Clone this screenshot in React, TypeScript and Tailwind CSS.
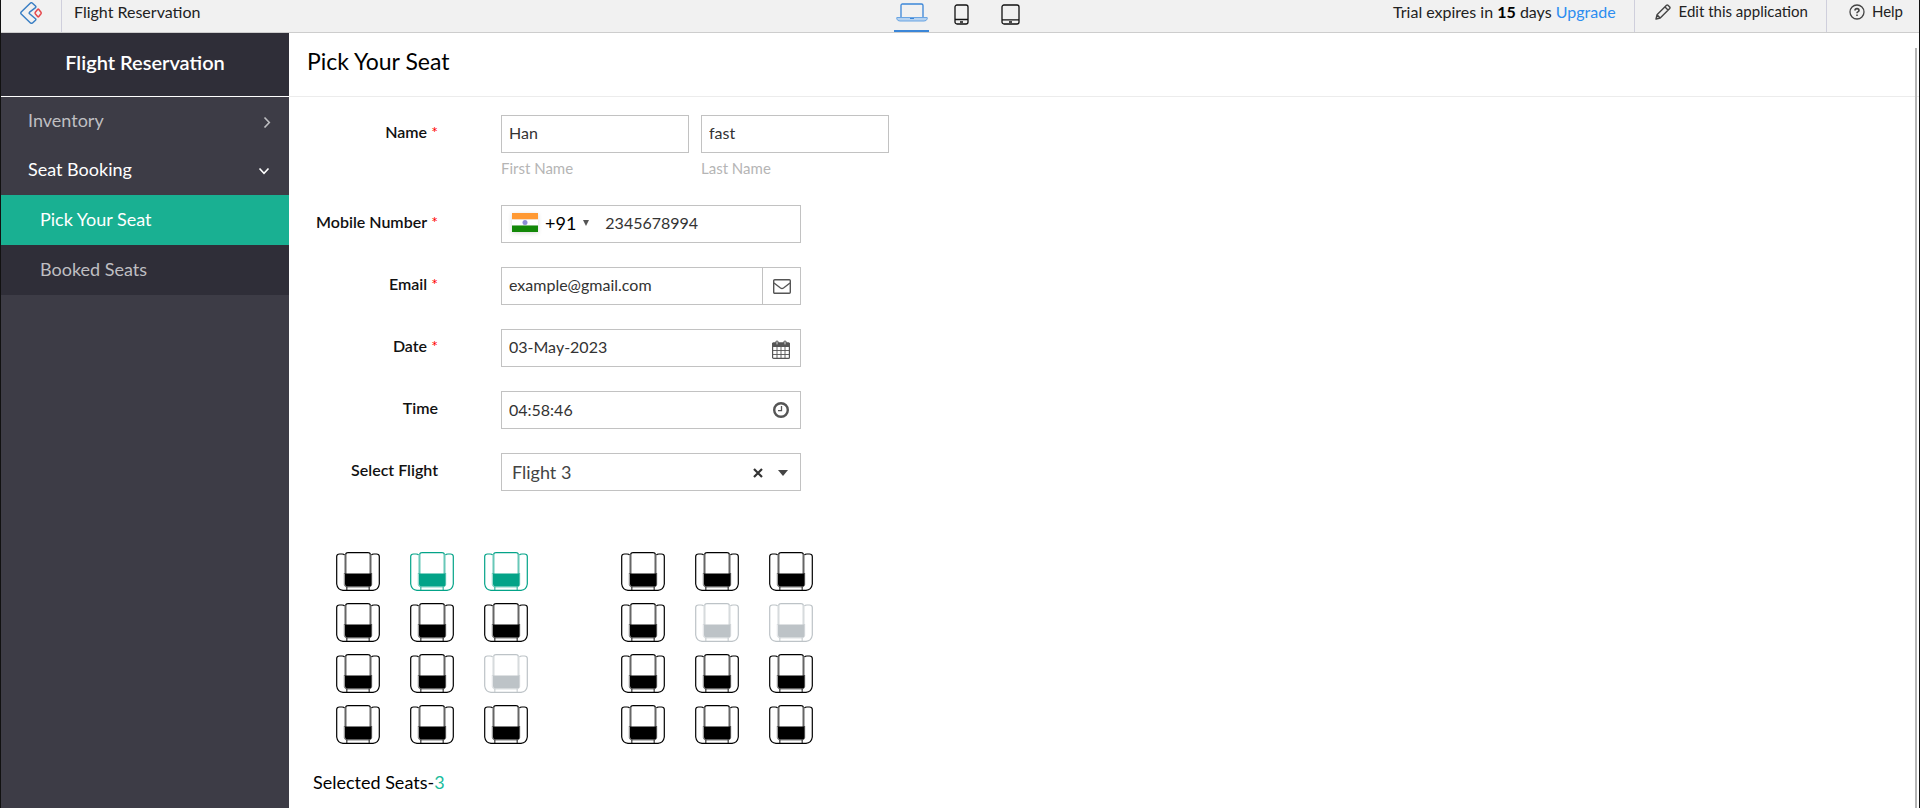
import { useState, type ReactNode } from "react";

type SeatState = "free" | "picked" | "taken";

const seatRows: SeatState[][] = [
  ["free", "picked", "picked", "free", "free", "free"],
  ["free", "free", "free", "free", "taken", "taken"],
  ["free", "free", "taken", "free", "free", "free"],
  ["free", "free", "free", "free", "free", "free"],
];

const seatColour: Record<SeatState, string> = {
  free: "text-black",
  picked: "text-[#03a388]",
  taken: "text-[#bdc3c7]",
};

function Seat({ state, label }: { state: SeatState; label: string }) {
  return (
    <button type="button" aria-label={label} disabled={state === "taken"} className={`block ${seatColour[state]}`}>
      <svg width="44" height="39" viewBox="0 0 44 39" fill="none" stroke="currentColor">
        <path strokeWidth="1.2" d="M8.500 3Q8 2 6 2H3.500Q.7 2 .7 4.500V32Q1.500 38 7 38.300H37Q42.500 38 43.300 32V4.500Q43.300 2 40.500 2H38Q36 2 35.500 3" />
        <path strokeWidth="1.3" d="M9.500 2.500Q10 .7 12 .7H32Q34 .7 34.500 2.500" />
        <path strokeWidth="2" strokeOpacity=".6" d="M9.500 2.500V22M34.500 2.500V22" />
        <path strokeWidth="1" strokeOpacity=".5" d="M8.300 21V33Q9 35 11 35H33Q35 35 35.700 33V21" />
        <path strokeWidth="1.3" strokeOpacity=".7" d="M10.800 34.500V38M33.200 34.500V38" />
        <path fill="currentColor" stroke="none" d="M9 21.500H35.500V32Q35.500 34.500 33 34.500H11.500Q9 34.500 9 32Z" />
      </svg>
    </button>
  );
}

function Field({ label, id, required, children }: { label: string; id: string; required?: boolean; children: ReactNode }) {
  return (
    <div className="flex items-start">
      <label htmlFor={id} className="w-[149px] shrink-0 pt-[5px] text-right text-base font-semibold leading-6 text-[#111]">
        {label}
        {required && <span className="font-normal text-[#f00]"> *</span>}
      </label>
      <div className="ml-[63px]">{children}</div>
    </div>
  );
}

function Chevron({ down }: { down?: boolean }) {
  return (
    <svg width="12" height="12" viewBox="0 0 12 12" fill="none" stroke="currentColor" strokeWidth="1.6">
      <path d={down ? "M1.500 3.500L6 8.300L10.500 3.500" : "M5.500 1.500L10.300 6.500L5.500 11.500"} />
    </svg>
  );
}

function TopBar() {
  return (
    <header className="flex h-[33px] shrink-0 items-stretch border-b border-[#cdcdcd] bg-[#f1f1f1] text-base leading-[23px] text-[#222]">
      <div className="flex flex-1">
        <a href="#home" aria-label="Creator" className="flex w-[61px] items-start justify-center border-r border-[#cfcfdc] pt-[2px]">
          <svg width="22" height="22" viewBox="0 0 22 22" fill="none" strokeWidth="1.500" strokeLinejoin="round">
            <path stroke="#3a7fc4" d="M10.500 1Q11.300 .4 12.200 1L15.500 4Q16.200 4.800 15.500 5.600L9.600 10.200Q8.800 11 9.600 11.800L15.500 16.800Q16.200 17.500 15.500 18.200L12.500 21Q11.500 21.700 10.500 21L1.200 12Q.4 11 1.200 10Z" />
            <path stroke="#e5484d" d="M17.800 7.200Q18.200 6.800 18.600 7.200L21 10.300Q21.400 11 21 11.700L18.600 14.800Q18.200 15.200 17.800 14.800L15.300 11.700Q14.900 11 15.300 10.300Z" />
          </svg>
        </a>
        <span className="pl-3">Flight Reservation</span>
      </div>
      <div className="flex items-stretch pr-1.5">
        <button type="button" aria-label="Desktop" className="flex w-[35px] justify-center border-b-2 border-[#3b86d8] pt-[3px]">
          <svg width="32" height="19" viewBox="0 0 32 19" fill="none" stroke="#3b86d8">
            <path strokeWidth="1.300" d="M5 14V2.500Q5 1 6.500 1H25.500Q27 1 27 2.500V14" />
            <path fill="#b5d2f0" stroke="#6aa5e3" d="M.8 14.500H31.200V16Q30.500 18 28 18H4Q1.500 18 .8 16Z" />
            <path d="M14 15.500H18" />
          </svg>
        </button>
        <button type="button" aria-label="Phone" className="ml-[25px] pb-1">
          <svg width="15" height="21" viewBox="0 0 15 21" fill="none" stroke="#111" strokeWidth="1.300">
            <rect x="1" y="1" width="13" height="19" rx="2" />
            <path d="M1 15.500H14M6 18H9" />
          </svg>
        </button>
        <button type="button" aria-label="Tablet" className="ml-8 pb-1">
          <svg width="19" height="21" viewBox="0 0 19 21" fill="none" stroke="#111" strokeWidth="1.300">
            <rect x="1" y="1" width="17" height="19" rx="2" />
            <path d="M1 15.800H18M8 18H11" />
          </svg>
        </button>
      </div>
      <div className="flex flex-1 justify-end">
        <p className="pr-[18px]">
          Trial expires in <b className="font-bold text-black">15</b> days <a href="#upgrade" className="text-[#2c8df0]">Upgrade</a>
        </p>
        <a href="#edit" className="flex gap-2 border-l border-[#cfcfdc] pl-5 pr-[18px] text-[15px]">
          <svg className="mt-1" width="16" height="16" viewBox="0 0 16 16" fill="none" stroke="#444" strokeWidth="1.400" strokeLinejoin="round">
            <path d="M1 15L2 10.800L11.500 1.300Q12.200 .7 13 1.300L14.700 3Q15.300 3.800 14.700 4.500L5.200 14Z M10 3L13 6M2 10.800L5.200 14" />
          </svg>
          Edit this application
        </a>
        <a href="#help" className="flex gap-[7px] border-l border-[#cfcfdc] pl-[22px] pr-[16px] text-[15px]">
          <svg className="mt-1" width="16" height="16" viewBox="0 0 16 16" fill="none" stroke="#444" strokeWidth="1.300">
            <circle cx="8" cy="8" r="7" />
            <path strokeWidth="1.600" d="M6 6.500Q6 4.600 8 4.600T10 6.400Q10 7.300 8.800 7.900Q8 8.300 8 9.300M8 10.500V12" />
          </svg>
          Help
        </a>
      </div>
    </header>
  );
}

function Sidebar() {
  return (
    <aside className="flex w-[288px] shrink-0 flex-col bg-[#3d3c46] text-lg leading-6 text-[#bfbfc2]">
      <h2 className="flex h-16 items-center justify-center border-b border-white bg-[#2f2e38] pb-1.5 text-xl font-semibold text-white">Flight Reservation</h2>
      <nav>
        <button type="button" className="flex h-[49px] w-full items-center justify-between pb-[3px] pl-[27px] pr-[18px]">
          Inventory <span className="pt-1"><Chevron /></span>
        </button>
        <button type="button" className="flex h-[49px] w-full items-center justify-between pb-[3px] pl-[27px] pr-[19px] text-white">
          Seat Booking <span className="pt-1"><Chevron down /></span>
        </button>
        <a href="#pick" className="flex h-[50px] items-center bg-[#19b092] pb-[3px] pl-[39px] text-white">Pick Your Seat</a>
        <a href="#booked" className="flex h-[50px] items-center bg-[#2f2e38] pb-[3px] pl-[39px]">Booked Seats</a>
      </nav>
    </aside>
  );
}

const box = "h-[38px] border border-[#c2c2c2] bg-white text-base text-[#333]";

export default function App() {
  const [name, setName] = useState({ first: "Han", last: "fast" });
  const [phone, setPhone] = useState("2345678994");
  const [email, setEmail] = useState("example@gmail.com");
  const [date, setDate] = useState("03-May-2023");
  const [time, setTime] = useState("04:58:46");
  const [flight, setFlight] = useState("Flight 3");

  return (
    <div className="flex h-screen flex-col overflow-hidden border-x border-[#111] bg-white font-['Lato',sans-serif] text-black">
      <TopBar />
      <div className="flex min-h-0 flex-1">
        <Sidebar />
        <main className="relative min-w-0 flex-1">
          <h1 className="flex h-16 items-center border-b border-[#ececec] pb-[7px] pl-[18px] text-[23px] leading-7">Pick Your Seat</h1>
          <span className="absolute right-[2px] top-[15px] bottom-0 w-[2px] bg-[#b5b5b5]" />
          <form className="flex flex-col gap-6 pt-[18px]">
            <Field label="Name" id="first" required>
              <div className="flex gap-3 text-[15px] leading-5 text-[#b5b5b5]">
                <div>
                  <input id="first" value={name.first} onChange={(e) => setName({ ...name, first: e.target.value })} className={`${box} block w-[188px] px-[7px] pb-[3px]`} />
                  <label htmlFor="first" className="block pb-[3px] pt-[5px]">First Name</label>
                </div>
                <div>
                  <input id="last" value={name.last} onChange={(e) => setName({ ...name, last: e.target.value })} className={`${box} block w-[188px] px-[7px] pb-[3px]`} />
                  <label htmlFor="last" className="block pb-[3px] pt-[5px]">Last Name</label>
                </div>
              </div>
            </Field>
            <Field label="Mobile Number" id="phone" required>
              <div className={`${box} flex w-[300px] items-center pb-[3px] pl-[10px]`}>
                <button type="button" aria-label="Country code" className="flex items-center text-lg text-black">
                  <svg width="26" height="19" viewBox="0 0 26 19" className="mr-[7px] drop-shadow-sm">
                    <path fill="#ff9933" d="M0 0H26V6.500H0Z" />
                    <path fill="#fff" d="M0 6.500H26V12.500H0Z" />
                    <path fill="#138808" d="M0 12.500H26V19H0Z" />
                    <circle cx="13" cy="9.500" r="2.500" fill="#8c8cd6" />
                  </svg>
                  +91
                  <svg width="6" height="6" viewBox="0 0 6 6" className="ml-[7px]"><path fill="#555" d="M0 0H6L3 6Z" /></svg>
                </button>
                <input id="phone" value={phone} onChange={(e) => setPhone(e.target.value)} className="ml-4 w-40" />
              </div>
            </Field>
            <Field label="Email" id="email" required>
              <div className={`${box} flex w-[300px] items-stretch`}>
                <input id="email" value={email} onChange={(e) => setEmail(e.target.value)} className="min-w-0 flex-1 px-[7px] pb-[3px]" />
                <span className="flex w-[38px] items-center justify-center border-l border-[#c2c2c2]">
                  <svg width="18" height="15" viewBox="0 0 18 15" fill="none" stroke="#555" strokeWidth="1.400">
                    <rect x=".7" y=".7" width="16.600" height="13.600" rx="1" />
                    <path d="M1 4L7.500 9Q9 10 10.500 9L17 4" />
                  </svg>
                </span>
              </div>
            </Field>
            <Field label="Date" id="date" required>
              <div className={`${box} flex w-[300px] items-center pr-[10px]`}>
                <input id="date" value={date} onChange={(e) => setDate(e.target.value)} className="min-w-0 flex-1 px-[7px] pb-[3px]" />
                <svg width="18" height="19" viewBox="0 0 18 19" className="mt-0.5" fill="none" stroke="#555">
                  <path fill="#555" d="M.6 3H17.400V6.500H.6Z" />
                  <rect x=".6" y="3" width="16.800" height="15.400" rx="1" strokeWidth="1.200" />
                  <path strokeWidth=".9" d="M5 7V18M9 7V18M13 7V18M1 10.500H17M1 14.500H17" />
                  <path strokeWidth="3.200" strokeLinecap="round" d="M5 2V4M13 2V4" />
                  <path stroke="#ddd" strokeWidth="1" strokeLinecap="round" d="M5 1.800V4M13 1.800V4" />
                </svg>
              </div>
            </Field>
            <Field label="Time" id="time">
              <div className={`${box} flex w-[300px] items-center pr-[11px]`}>
                <input id="time" value={time} onChange={(e) => setTime(e.target.value)} className="min-w-0 flex-1 px-[7px] pb-px" />
                <svg width="16" height="16" viewBox="0 0 16 16" fill="none" stroke="#555">
                  <circle cx="8" cy="8" r="6.800" strokeWidth="2.400" />
                  <path strokeWidth="1.300" d="M8.500 4V8.700H5" />
                </svg>
              </div>
            </Field>
            <Field label="Select Flight" id="flight">
              <div className={`${box} flex w-[300px] items-center pl-[10px] pr-3`}>
                <select id="flight" value={flight} onChange={(e) => setFlight(e.target.value)} className="min-w-0 flex-1 appearance-none pb-px text-lg leading-6 text-[#444]">
                  <option value=""></option>
                  <option>Flight 1</option>
                  <option>Flight 2</option>
                  <option>Flight 3</option>
                </select>
                <button type="button" aria-label="Clear" onClick={() => setFlight("")} className="mr-[15px] pt-0.5">
                  <svg width="10" height="10" viewBox="0 0 10 10" stroke="#333" strokeWidth="2.200"><path d="M1 1L9 9M9 1L1 9" /></svg>
                </button>
                <svg width="10" height="6" viewBox="0 0 10 6" className="mt-0.5"><path fill="#444" d="M0 0H10L5 6Z" /></svg>
              </div>
            </Field>
          </form>
          <div className="flex flex-col gap-3 pl-[47px] pt-[61px]">
            {seatRows.map((row, r) => (
              <div key={r} className="flex gap-[93px]">
                {[row.slice(0, 3), row.slice(3)].map((side, s) => (
                  <div key={s} className="flex gap-[30px]">
                    {side.map((state, c) => (
                      <Seat key={c} state={state} label={`Seat ${r * 6 + s * 3 + c + 1}`} />
                    ))}
                  </div>
                ))}
              </div>
            ))}
          </div>
          <p className="pl-6 pt-[26px] text-lg leading-6">
            Selected Seats-<span className="text-[#1abc9c]">3</span>
          </p>
        </main>
      </div>
    </div>
  );
}
